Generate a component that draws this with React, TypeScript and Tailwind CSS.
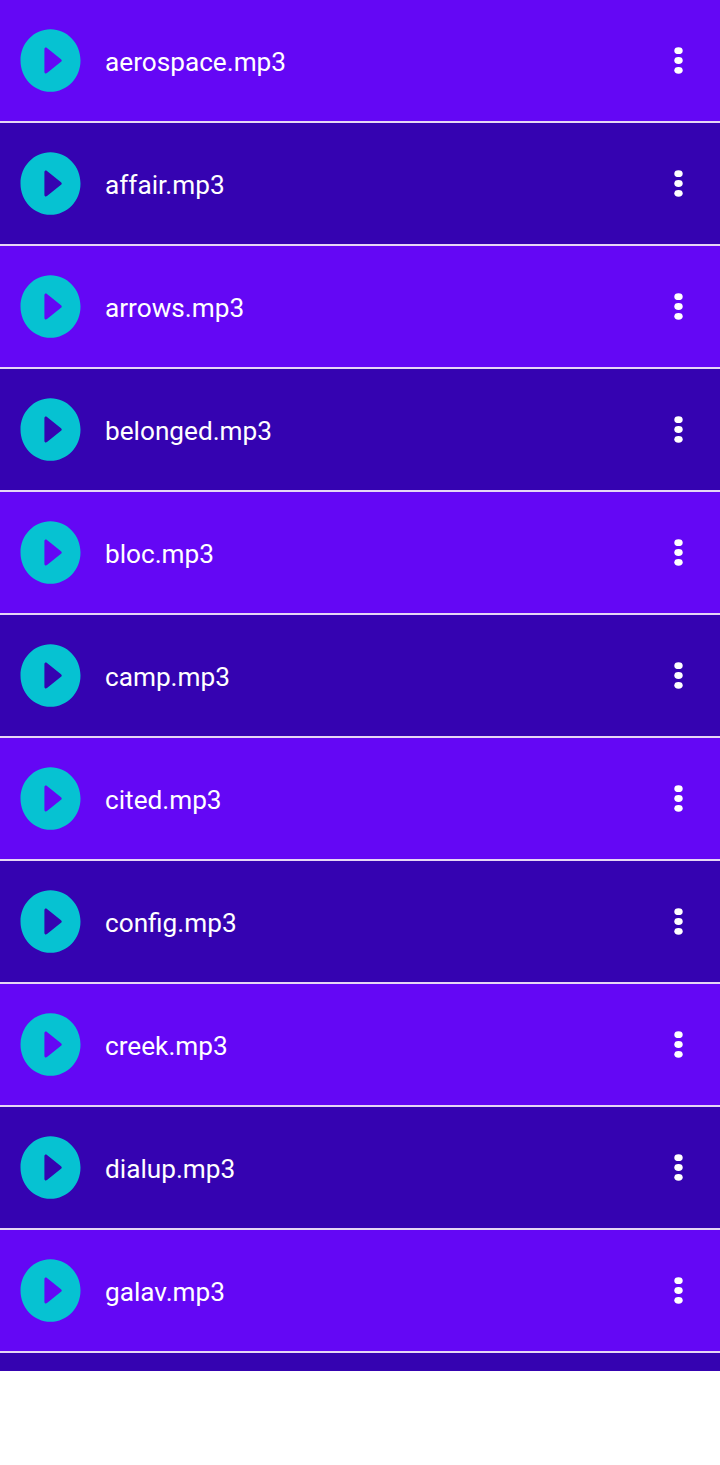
import React from 'react';

interface TrackRowProps {
  name: string;
  index: number;
}

const tracks = [
  'aerospace.mp3',
  'affair.mp3',
  'arrows.mp3',
  'belonged.mp3',
  'bloc.mp3',
  'camp.mp3',
  'cited.mp3',
  'config.mp3',
  'creek.mp3',
  'dialup.mp3',
  'galav.mp3',
];

const PlayIcon: React.FC = () => (
  <svg width="61" height="63" viewBox="0 0 61 63" className="block shrink-0">
    <path
      fillRule="evenodd"
      fill="#06c2d2"
      d="M30.5 0.2C47.2 0.2 60.5 14.2 60.5 31.5S47.2 62.8 30.5 62.8 0.5 48.8 0.5 31.5 13.8 0.2 30.5 0.2ZM24.4 20.3V42.7C24.4 44.3 25.7 45 27 44L41 32.8C42 32 42 31 41 30.2L27 19C25.7 18 24.4 18.7 24.4 20.3Z"
    />
  </svg>
);

const MoreIcon: React.FC = () => (
  <svg width="10" height="28" viewBox="0 0 10 28" fill="#ffffff" className="block shrink-0">
    <ellipse cx="5.5" cy="3.7" rx="4.2" ry="3.4" />
    <ellipse cx="5.5" cy="13.5" rx="4.2" ry="3.4" />
    <ellipse cx="5.5" cy="23.3" rx="4.2" ry="3.4" />
  </svg>
);

const TrackRow: React.FC<TrackRowProps> = ({ name, index }) => (
  <li
    className={`flex h-[123px] items-center border-b-2 border-[#e6d6f6] pl-5 pr-[37px] ${
      index % 2 === 0 ? 'bg-[#6407f5]' : 'bg-[#3503b1]'
    }`}
  >
    <button type="button" aria-label="Play">
      <PlayIcon />
    </button>
    <span className="ml-6 flex-1 pt-[3px] text-[26.2px] leading-8 text-white">{name}</span>
    <button type="button" aria-label="More options">
      <MoreIcon />
    </button>
  </li>
);

export default function App() {
  return (
    <div className="min-h-[1465px] bg-white font-['Roboto',sans-serif]">
      <ul>
        {tracks.map((name, index) => (
          <TrackRow key={name} name={name} index={index} />
        ))}
      </ul>
      {/* top edge of the next row */}
      <div className="h-[18px] bg-[#3503b1]" />
    </div>
  );
}
